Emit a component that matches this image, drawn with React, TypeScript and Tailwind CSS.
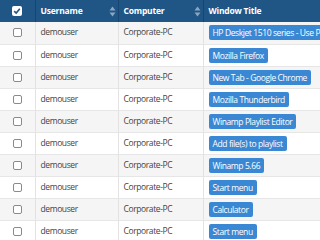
import React from "react";

const titles = [
  "HP Deskjet 1510 series - Use Printer Offline",
  "Mozilla Firefox",
  "New Tab - Google Chrome",
  "Mozilla Thunderbird",
  "Winamp Playlist Editor",
  "Add file(s) to playlist",
  "Winamp 5.66",
  "Start menu",
  "Calculator",
  "Start menu",
];

const SortIcon = () => (
  <svg width="7" height="11" viewBox="0 0 7 11" className="shrink-0">
    <path d="M3.5 0.5 L6.5 4.5 L0.5 4.5 Z" fill="#8ba6c2" />
    <path d="M3.5 10.5 L6.5 6.5 L0.5 6.5 Z" fill="#8ba6c2" />
  </svg>
);

const Box = () => (
  <span className="inline-block w-[9px] h-[9px] border border-[#8a8a8a] rounded-[2px] bg-white" />
);

export default function App() {
  return (
    <div className="w-[320px] h-[240px] overflow-hidden bg-white font-['Open_Sans',sans-serif]">
      <table className="border-collapse table-fixed w-[420px]">
        <colgroup>
          <col className="w-[35px]" />
          <col className="w-[83px]" />
          <col className="w-[85px]" />
          <col className="w-[217px]" />
        </colgroup>
        <thead>
          <tr className="h-[22px] bg-[#1f5686] text-white text-[8.5px] font-bold tracking-[-0.2px]">
            <th className="border-r border-[#174670] p-0">
              <div className="flex justify-center items-center">
                <span className="w-[10px] h-[10px] bg-white rounded-[2px] flex items-center justify-center">
                  <svg width="8" height="8" viewBox="0 0 8 8">
                    <path d="M1.2 4.2 L3.2 6.1 L6.8 1.8" stroke="#1f5686" strokeWidth="1.6" fill="none" />
                  </svg>
                </span>
              </div>
            </th>
            <th className="border-r border-[#174670] pl-[5px] pr-[2px] text-left">
              <div className="flex items-center justify-between">
                <span>Username</span>
                <SortIcon />
              </div>
            </th>
            <th className="border-r border-[#174670] pl-[5px] pr-[2px] text-left">
              <div className="flex items-center justify-between">
                <span>Computer</span>
                <SortIcon />
              </div>
            </th>
            <th className="px-[5px] text-left whitespace-nowrap">Window Title</th>
          </tr>
        </thead>
        <tbody className="text-[8.5px] tracking-[-0.4px] text-[#444]">
          {titles.map((t, i) => (
            <tr
              key={i}
              className={`h-[22px] border-b border-[#e6e6e6] ${i % 2 === 0 ? "bg-[#f5f5f5]" : "bg-white"}`}
            >
              <td className="border-r border-[#e3e3e3] p-0">
                <div className="flex justify-center items-center">
                  <Box />
                </div>
              </td>
              <td className="border-r border-[#e3e3e3] px-[5px]">demouser</td>
              <td className="border-r border-[#e3e3e3] px-[5px]">Corporate-PC</td>
              <td className="px-[5px] whitespace-nowrap">
                <span className="inline-block bg-[#3a88d4] text-white rounded-[2px] px-[4px] leading-[15px]">
                  {t}
                </span>
              </td>
            </tr>
          ))}
        </tbody>
      </table>
    </div>
  );
}
